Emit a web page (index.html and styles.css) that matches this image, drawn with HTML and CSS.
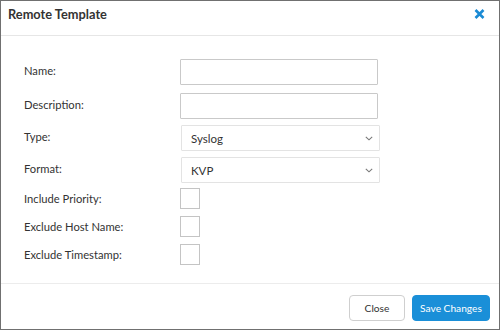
FILE: index.html
```html
<!DOCTYPE html>
<html>
<head>
<meta charset="utf-8">
<link rel="stylesheet" href="styles.css">
</head>
<body>
<div class="modal">
  <div class="modal-header">
    <h1 class="title">Remote Template</h1>
    <button class="close-x" aria-label="Close">
      <svg width="11" height="10" viewBox="0 0 11 10"><path d="M1.5 1 L9.5 9 M9.5 1 L1.5 9" stroke="#1a8ad4" stroke-width="2.6" stroke-linecap="butt"/></svg>
    </button>
  </div>
  <div class="modal-body">
    <div class="row row-name">
      <label class="label">Name:</label>
      <input class="text-input" type="text">
    </div>
    <div class="row row-desc">
      <label class="label">Description:</label>
      <input class="text-input" type="text">
    </div>
    <div class="row row-type">
      <label class="label">Type:</label>
      <div class="select">
        <span class="select-value">Syslog</span>
        <svg class="chev" width="8" height="5" viewBox="0 0 8 5"><path d="M0.8 0.8 L4 3.8 L7.2 0.8" fill="none" stroke="#777" stroke-width="1.1"/></svg>
      </div>
    </div>
    <div class="row row-format">
      <label class="label">Format:</label>
      <div class="select">
        <span class="select-value">KVP</span>
        <svg class="chev" width="8" height="5" viewBox="0 0 8 5"><path d="M0.8 0.8 L4 3.8 L7.2 0.8" fill="none" stroke="#777" stroke-width="1.1"/></svg>
      </div>
    </div>
    <div class="row row-check row-check1">
      <label class="label">Include Priority:</label>
      <span class="checkbox"></span>
    </div>
    <div class="row row-check row-check2">
      <label class="label">Exclude Host Name:</label>
      <span class="checkbox"></span>
    </div>
    <div class="row row-check row-check3">
      <label class="label">Exclude Timestamp:</label>
      <span class="checkbox"></span>
    </div>
  </div>
  <div class="modal-footer">
    <button class="btn btn-default">Close</button>
    <button class="btn btn-primary">Save Changes</button>
  </div>
</div>
</body>
</html>
```
FILE: styles.css
```css
html, body {
  margin: 0;
  padding: 0;
  background: #fff;
}
body {
  font-family: Lato, "Open Sans", sans-serif;
  color: #333;
}
.modal {
  box-sizing: border-box;
  width: 500px;
  height: 330px;
  border: 1px solid #707070;
  display: flex;
  flex-direction: column;
  background: #fff;
}
.modal-header {
  height: 34px;
  border-bottom: 1px solid #e6e6e6;
  display: flex;
  align-items: center;
  justify-content: space-between;
  padding: 0 14px 0 7px;
}
.title {
  margin: 0;
  font-size: 12.8px;
  font-weight: 700;
  color: #333;
  position: relative;
  top: -4px;
}
.close-x {
  border: 0;
  background: none;
  padding: 0;
  display: flex;
  position: relative;
  top: -4px;
}
.modal-body {
  flex: 1;
  padding: 23px 0 0 23px;
  display: flex;
  flex-direction: column;
}
.row {
  display: flex;
  align-items: center;
}
.label {
  width: 156px;
  font-size: 11.2px;
  color: #333;
  padding-bottom: 3px;
}
.row-check .label {
  padding-bottom: 0;
}
.text-input {
  box-sizing: border-box;
  width: 198px;
  height: 26px;
  margin: 0;
  border: 1px solid #c9c9c9;
  border-radius: 1px;
  background: #fff;
  padding: 0 8px;
  font-family: inherit;
}
.row-desc { margin-top: 8px; }
.row-type { margin-top: 6px; }
.row-format { margin-top: 6px; }
.row-check1 { margin-top: 5px; }
.row-check2 { margin-top: 7px; }
.row-check3 { margin-top: 7px; }
.select {
  box-sizing: border-box;
  width: 199px;
  height: 26px;
  margin-left: 1px;
  border: 1px solid #e3e3e3;
  border-radius: 1px;
  display: flex;
  align-items: center;
  justify-content: space-between;
  padding: 0 6px 0 9px;
}
.select-value {
  font-size: 11.5px;
  color: #333;
}
.chev { display: block; }
.checkbox {
  box-sizing: border-box;
  width: 20px;
  height: 21px;
  border: 1px solid #c4c4c4;
  background: #fff;
}
.modal-footer {
  height: 46px;
  border-top: 1px solid #ececec;
  display: flex;
  align-items: flex-start;
  justify-content: flex-end;
  gap: 7px;
  padding: 11px 9px 0 0;
  box-sizing: border-box;
}
.btn {
  box-sizing: border-box;
  height: 26px;
  border-radius: 4px;
  font-family: inherit;
  font-size: 10.2px;
  padding: 0;
  cursor: pointer;
}
.btn-default {
  width: 56px;
  background: #fff;
  border: 1px solid #cfcfcf;
  color: #333;
}
.btn-primary {
  width: 78px;
  background: #1a8fd8;
  border: 1px solid #1a8fd8;
  color: #fff;
}
```
